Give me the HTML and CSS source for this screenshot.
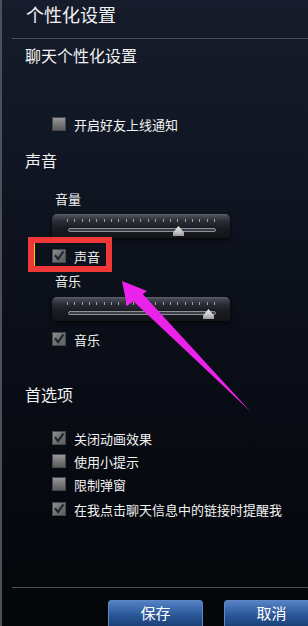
FILE: index.html
```html
<!DOCTYPE html>
<html lang="zh-CN">
<head>
<meta charset="utf-8">
<title>个性化设置</title>
<link rel="stylesheet" href="styles.css">
</head>
<body>
<div class="window">
  <div class="title">个性化设置</div>
  <div class="sep"></div>
  <div class="heading h-chat">聊天个性化设置</div>
  <div class="check row-online"><span class="box"></span><span>开启好友上线通知</span></div>

  <div class="heading h-sound">声音</div>
  <div class="label l-vol">音量</div>
  <div class="slider s-vol">
    <div class="ticks"></div>
    <div class="track"></div>
    <div class="thumb" style="left:121px"></div>
  </div>
  <div class="check row-sound"><span class="box checked"><svg viewBox="0 0 14 14"><polyline points="3,7 6,10.5 11.5,2.5"/></svg></span><span>声音</span></div>
  <div class="label l-music">音乐</div>
  <div class="slider s-music">
    <div class="ticks"></div>
    <div class="track"></div>
    <div class="thumb" style="left:151px"></div>
  </div>
  <div class="check row-music"><span class="box checked"><svg viewBox="0 0 14 14"><polyline points="3,7 6,10.5 11.5,2.5"/></svg></span><span>音乐</span></div>

  <div class="heading h-pref">首选项</div>
  <div class="prefs">
    <div class="check"><span class="box checked"><svg viewBox="0 0 14 14"><polyline points="3,7 6,10.5 11.5,2.5"/></svg></span><span>关闭动画效果</span></div>
    <div class="check"><span class="box"></span><span>使用小提示</span></div>
    <div class="check"><span class="box"></span><span>限制弹窗</span></div>
    <div class="check last"><span class="box checked"><svg viewBox="0 0 14 14"><polyline points="3,7 6,10.5 11.5,2.5"/></svg></span><span>在我点击聊天信息中的链接时提醒我</span></div>
  </div>

  <div class="footer">
    <div class="sep"></div>
    <div class="buttons">
      <div class="btn">保存</div>
      <div class="btn">取消</div>
    </div>
  </div>

  <div class="highlight"></div>
  <svg class="arrow" width="308" height="626" viewBox="0 0 308 626">
    <polygon points="122,281 127,306 147,291"/>
    <polygon points="131,299 140,291 251,412"/>
  </svg>
</div>
</body>
</html>
```
FILE: styles.css
```css
* { box-sizing: border-box; }
html, body { margin: 0; padding: 0; background: #05070b; }
body {
  font-family: "Noto Sans CJK SC", "Noto Sans", sans-serif;
  color: #f2f2f2;
}
.window {
  position: relative;
  width: 308px;
  height: 626px;
  overflow: hidden;
  border-left: 2px solid #4d5058;
  display: flex;
  flex-direction: column;
  background: linear-gradient(180deg, #161c2b 0%, #111624 25%, #0b0f19 50%, #070a11 75%, #040609 100%);
}
.title {
  height: 38px;
  line-height: 28px;
  font-size: 18px;
  padding-left: 24px;
  flex: none;
}
.sep {
  height: 1px;
  margin-left: 10px;
  background: #4a4e58;
  flex: none;
}
.heading {
  font-size: 16px;
  line-height: 20px;
  height: 20px;
  padding-left: 23px;
  flex: none;
}
.h-chat { margin-top: 6px; }
.h-sound { margin-top: 16px; }
.h-pref { margin-top: 35px; }

.label {
  font-size: 13px;
  line-height: 18px;
  height: 18px;
  padding-left: 53px;
  flex: none;
}
.l-vol { margin-top: 20px; }
.l-music { margin-top: 6px; }

.check {
  display: flex;
  align-items: center;
  height: 20px;
  padding-left: 50px;
  font-size: 13px;
  gap: 8px;
  flex: none;
  white-space: nowrap;
}
.row-online { margin-top: 49px; }
.row-sound { margin-top: 8px; }
.row-music { margin-top: 8px; }

.box {
  width: 14px;
  height: 14px;
  flex: none;
  border: 1px solid #45474c;
  background: linear-gradient(180deg, #9a9a9a 0%, #7a7a7a 45%, #5c5c5c 100%);
  display: flex;
}
.box.checked {
  background: linear-gradient(135deg, #8e8e8e 0%, #717171 50%, #5e5e5e 100%);
}
.box svg { width: 12px; height: 12px; }
.box polyline {
  fill: none;
  stroke: #1f2431;
  stroke-width: 2.4;
  stroke-linecap: square;
}

.slider {
  position: relative;
  margin-left: 50px;
  width: 178px;
  height: 24px;
  flex: none;
  border-radius: 5px 5px 3px 3px;
  background: linear-gradient(180deg, #60646e 0px, #454952 2px, #2a2d35 7px, #1a1c22 14px, #121418 100%);
  box-shadow: 0 2px 4px rgba(0,0,0,0.7);
  padding-top: 5px;
}
.s-vol { margin-top: 6px; }
.s-music { margin-top: 7px; }
.ticks {
  margin-left: 15px;
  width: 148px;
  height: 3px;
  background: repeating-linear-gradient(90deg, #9da1a9 0px, #9da1a9 1px, transparent 1px, transparent 7.35px);
}
.track {
  margin: 6px 14px 0 16px;
  height: 4px;
  border: 1px solid #8c9098;
  border-radius: 2px;
  background: #3a3d45;
}
.thumb {
  position: absolute;
  top: 12px;
  width: 11px;
  height: 10px;
  background: linear-gradient(180deg, #eeeeee 0%, #c4c4c4 60%, #9a9a9a 100%);
  clip-path: polygon(50% 0, 100% 65%, 100% 100%, 0 100%, 0 65%);
}

.prefs {
  margin-top: 24px;
  display: flex;
  flex-direction: column;
  gap: 3px;
}
.prefs .last { margin-top: 2px; }

.footer {
  margin-top: auto;
  height: 39px;
  flex: none;
}
.buttons {
  display: flex;
  gap: 21px;
  margin-top: 12px;
  padding-left: 106px;
}
.btn {
  flex: none;
  width: 95px;
  height: 30px;
  border: 1px solid #5f86c6;
  border-radius: 3px;
  background: linear-gradient(180deg, #5582c4 0%, #3764a6 35%, #25508e 60%, #1b3d72 100%);
  color: #ffffff;
  font-size: 15px;
  text-align: center;
  line-height: 24px;
}

.highlight {
  position: absolute;
  left: 26px;
  top: 237px;
  width: 84px;
  height: 35px;
  border: 6px solid #f03838;
  box-shadow: inset 1px 0 0 #e6d200;
}
.arrow {
  position: absolute;
  left: -2px;
  top: 0;
}
.arrow polygon { fill: #ea22ea; }
```
